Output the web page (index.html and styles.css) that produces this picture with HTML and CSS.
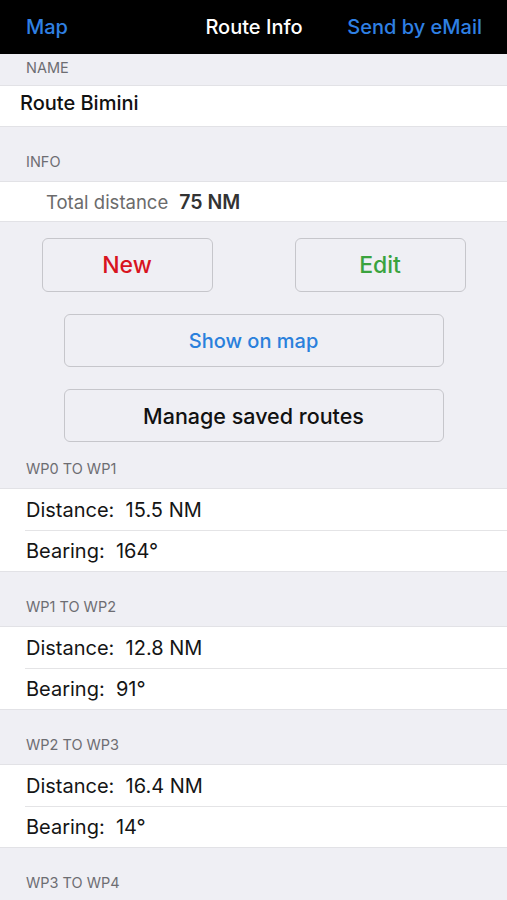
FILE: index.html
```html
<!DOCTYPE html>
<html lang="en">
<head>
    <meta charset="UTF-8">
    <meta name="viewport" content="width=device-width, initial-scale=1.0">
    <title>Route Info</title>
    <link rel="stylesheet" href="styles.css">
</head>
<body>
    <div class="navbar">
        <span class="nav-link nav-left">Map</span>
        <span class="nav-title">Route Info</span>
        <span class="nav-link nav-right">Send by eMail</span>
    </div>

    <div class="section-header first">Name</div>
    <div class="group">
        <div class="row route-name">Route Bimini</div>
    </div>

    <div class="section-header">Info</div>
    <div class="group">
        <div class="row info-row">
            <span class="info-label">Total distance</span>
            <span class="info-value">75 NM</span>
        </div>
    </div>

    <div class="actions">
        <div class="action-pair">
            <button class="btn btn-half btn-new">New</button>
            <button class="btn btn-half btn-edit">Edit</button>
        </div>
        <button class="btn btn-wide btn-map">Show on map</button>
        <button class="btn btn-wide btn-manage">Manage saved routes</button>
    </div>

    <div class="section-header tight">WP0 to WP1</div>
    <div class="group">
        <div class="row leg-row">Distance:&nbsp; 15.5 NM</div>
        <div class="row leg-row">Bearing:&nbsp; 164°</div>
    </div>

    <div class="section-header">WP1 to WP2</div>
    <div class="group">
        <div class="row leg-row">Distance:&nbsp; 12.8 NM</div>
        <div class="row leg-row">Bearing:&nbsp; 91°</div>
    </div>

    <div class="section-header">WP2 to WP3</div>
    <div class="group">
        <div class="row leg-row">Distance:&nbsp; 16.4 NM</div>
        <div class="row leg-row">Bearing:&nbsp; 14°</div>
    </div>

    <div class="section-header">WP3 to WP4</div>
    <div class="group">
        <div class="row leg-row"></div>
    </div>
</body>
</html>
```

FILE: styles.css
```css
body {
    margin: 0;
    background-color: #efeff4;
    font-family: Inter, "Noto Sans", sans-serif;
    color: #111;
}

/* Nav bar */
.navbar {
    height: 54px;
    background-color: #000;
    display: grid;
    grid-template-columns: 1fr auto 1fr;
    align-items: center;
    padding: 0 25px 0 26px;
    font-size: 20px;
}
.nav-link {
    color: #2f80e4;
    font-weight: 500;
}
.nav-right {
    text-align: right;
}
.nav-title {
    color: #fff;
    font-weight: 500;
}

/* Sections */
.section-header {
    font-size: 14.5px;
    line-height: 17px;
    color: #6d6d72;
    text-transform: uppercase;
    padding: 26px 0 11px 26px;
}
.section-header.first {
    padding-top: 5px;
    padding-bottom: 9px;
}
.section-header.tight {
    padding-top: 0;
}
.group {
    background-color: #fff;
    border-top: 1px solid #e2e2e6;
    border-bottom: 1px solid #e2e2e6;
}
.row {
    box-sizing: border-box;
    height: 41px;
    display: flex;
    align-items: center;
}
.route-name {
    height: 40px;
    padding: 0 0 6px 20px;
    font-size: 20px;
    font-weight: 500;
}
.info-row {
    height: 39px;
    padding-left: 46px;
    font-size: 18.5px;
    gap: 11px;
}
.info-label {
    color: #6b6b6b;
}
.info-value {
    color: #333;
    font-size: 19.5px;
    font-weight: 600;
}
.leg-row {
    margin-left: 25px;
    padding-left: 1px;
    font-size: 20px;
    color: #151515;
}
.leg-row + .leg-row {
    border-top: 1px solid #e4e4e6;
}

/* Buttons */
.actions {
    display: flex;
    flex-direction: column;
    align-items: center;
    gap: 22px;
    padding: 16px 0 18px;
}
.action-pair {
    display: flex;
    gap: 82px;
}
.btn {
    height: 54px;
    background-color: transparent;
    border: 1px solid #c6c6cb;
    border-radius: 6px;
    font-family: inherit;
    font-size: 21.5px;
    font-weight: 500;
    padding: 0;
}
.btn-half {
    width: 171px;
    font-size: 23px;
}
.btn-wide {
    width: 380px;
    height: 53px;
}
.btn-new {
    color: #d8141f;
}
.btn-edit {
    color: #3aa33e;
}
.btn-map {
    color: #2a80dc;
    font-size: 20px;
}
.btn-manage {
    color: #111;
}
```
